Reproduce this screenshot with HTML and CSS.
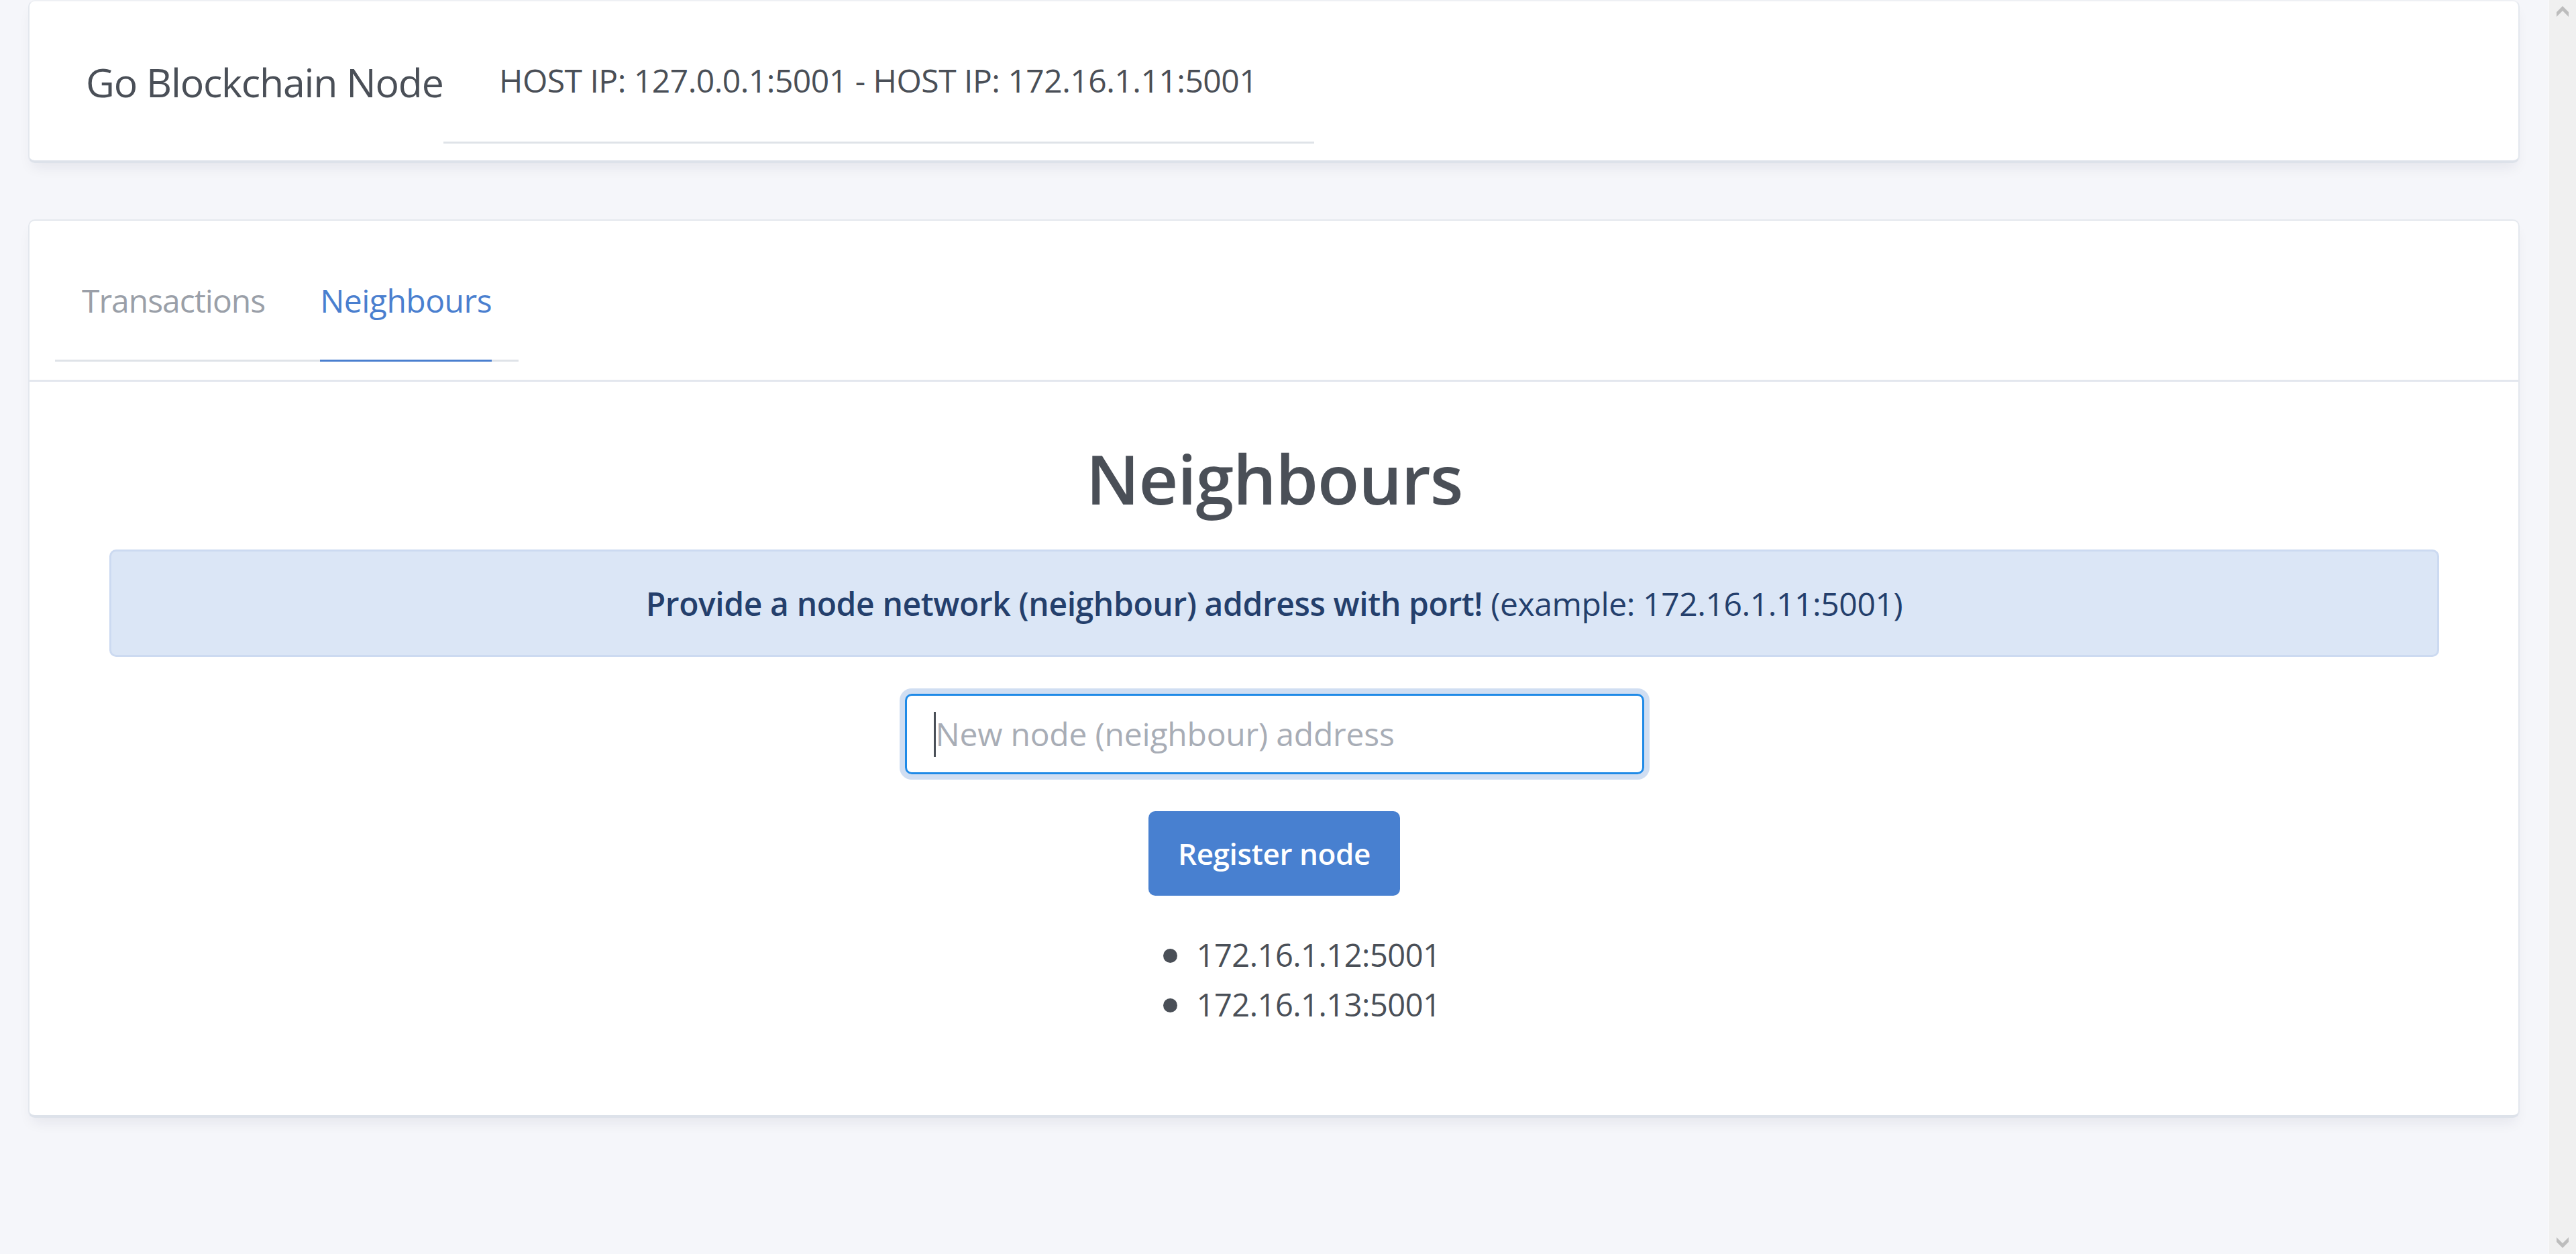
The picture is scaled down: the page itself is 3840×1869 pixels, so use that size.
FILE: index.html
```html
<!DOCTYPE html>
<html lang="en">
<head>
<meta charset="utf-8">
<title>Go Blockchain Node</title>
<link rel="stylesheet" href="styles.css">
</head>
<body>
<div class="page">
  <header class="card header-card">
    <div class="brand">Go Blockchain Node</div>
    <div class="host-tabs"><span class="host-text">HOST IP: 127.0.0.1:5001 - HOST IP: 172.16.1.11:5001</span></div>
  </header>

  <main class="card main-card">
    <div class="tabs-section">
      <ul class="tabs">
        <li class="tab">Transactions</li>
        <li class="tab active">Neighbours</li>
      </ul>
    </div>
    <section class="content">
      <h1 class="title">Neighbours</h1>
      <div class="notification"><strong>Provide a node network (neighbour) address with port!</strong> (example: 172.16.1.11:5001)</div>
      <div class="field">
        <div class="input"><span class="caret"></span><span class="placeholder">New node (neighbour) address</span></div>
      </div>
      <div class="actions"><button class="button">Register node</button></div>
      <ul class="nodes">
        <li>172.16.1.12:5001</li>
        <li>172.16.1.13:5001</li>
      </ul>
    </section>
  </main>
</div>
<div class="scrollbar">
  <svg class="arrow" width="18" height="16" viewBox="0 0 18 16"><polygon points="9,0 18,9 18,16 9,7 0,16 0,9" fill="#bdbdbd"/></svg>
  <svg class="arrow" width="18" height="16" viewBox="0 0 18 16"><polygon points="9,16 18,7 18,0 9,9 0,0 0,7" fill="#bdbdbd"/></svg>
</div>
</body>
</html>
```

FILE: styles.css
```css
html, body {
  margin: 0;
  padding: 0;
  height: 100%;
}
body {
  display: flex;
  background: #f5f6fa;
  font-family: "Open Sans", "Noto Sans", sans-serif;
  color: #4a4f57;
  overflow: hidden;
}
.page {
  flex: 1;
  min-width: 0;
  padding: 0 43px 0 42px;
}
.card {
  background: #fff;
  border: 2px solid #e4e8ee;
  border-bottom: 4px solid #dde2ea;
  border-radius: 10px;
  box-shadow: 0 12px 20px -6px rgba(20, 30, 60, 0.08);
}
.header-card {
  height: 243px;
  box-sizing: border-box;
  display: flex;
  align-items: flex-start;
  border-top-color: #eef0f4;
}
.brand {
  flex: none;
  width: 533px;
  box-sizing: border-box;
  margin-left: 84px;
  margin-top: 84px;
  font-size: 59px;
  letter-spacing: -1.2px;
  line-height: 73px;
  white-space: nowrap;
}
.host-tabs {
  flex: none;
  width: 1298px;
  box-sizing: border-box;
  margin-top: 88px;
  padding: 0 0 61px 83px;
  border-bottom: 3px solid #dfe3e8;
  font-size: 48px;
  letter-spacing: -0.5px;
  line-height: 60px;
  white-space: nowrap;
}
.main-card {
  margin-top: 84px;
  height: 1339px;
  box-sizing: border-box;
}
.tabs-section {
  padding: 88px 0 27px 38px;
  border-bottom: 3px solid #e3e7ee;
}
.tabs {
  list-style: none;
  margin: 0;
  padding: 0 40px;
  display: inline-flex;
  gap: 82px;
  border-bottom: 3px solid #dfe3e8;
}
.tab {
  font-size: 48px;
  letter-spacing: -1px;
  line-height: 61px;
  padding-bottom: 58px;
  margin-bottom: -3px;
  border-bottom: 3px solid transparent;
  color: #9a9fa8;
}
.tab.active {
  color: #4a7fcf;
  border-bottom-color: #4a7fcf;
  letter-spacing: -0.5px;
}
.content {
  padding: 80px 118px 0 119px;
  text-align: center;
}
.title {
  margin: 0;
  font-size: 102px;
  letter-spacing: -1.1px;
  line-height: 127px;
  font-weight: 600;
  color: #4a4f57;
}
.notification {
  margin-top: 43px;
  background: #dbe6f6;
  border: 3px solid #ccdaf1;
  border-radius: 10px;
  padding: 48px 20px 46px;
  font-size: 48px;
  letter-spacing: -0.4px;
  line-height: 60px;
  color: #243f6c;
}
.notification strong {
  font-weight: 600;
}
.field {
  display: flex;
  justify-content: center;
  margin-top: 55px;
}
.input {
  width: 1102px;
  height: 120px;
  box-sizing: border-box;
  border: 3px solid #1f8ae7;
  border-radius: 10px;
  box-shadow: 0 0 0 8px #d0def2;
  display: flex;
  align-items: center;
  padding-left: 40px;
  text-align: left;
  font-size: 48px;
  letter-spacing: -0.2px;
  line-height: 60px;
}
.caret {
  width: 3px;
  height: 67px;
  background: #4a4f57;
  flex: none;
}
.placeholder {
  color: #a8adb6;
  white-space: nowrap;
}
.actions {
  margin-top: 55px;
  display: flex;
  justify-content: center;
}
.button {
  height: 126px;
  width: 375px;
  padding: 0;
  border: none;
  border-radius: 10px;
  background: #4880d0;
  color: #fff;
  font-family: "Open Sans", "Noto Sans", sans-serif;
  font-size: 44px;
  letter-spacing: -0.4px;
  font-weight: 600;
}
.nodes {
  list-style: none;
  margin: 51px auto 0;
  padding: 0 0 0 82px;
  width: fit-content;
  text-align: left;
}
.nodes li {
  display: flex;
  align-items: center;
  gap: 29px;
  font-size: 47px;
  letter-spacing: -0.5px;
  line-height: 74px;
}
.nodes li::before {
  content: "";
  width: 21px;
  height: 21px;
  border-radius: 50%;
  background: #4a4f57;
  flex: none;
  margin-top: 3px;
}
.scrollbar {
  flex: none;
  width: 41px;
  border-left: 1px solid #fafafa;
  background: #f0f0f0;
  display: flex;
  flex-direction: column;
  justify-content: space-between;
  align-items: center;
  padding: 9px 0 9px;
  box-sizing: border-box;
}
.arrow {
  display: block;
}
```
